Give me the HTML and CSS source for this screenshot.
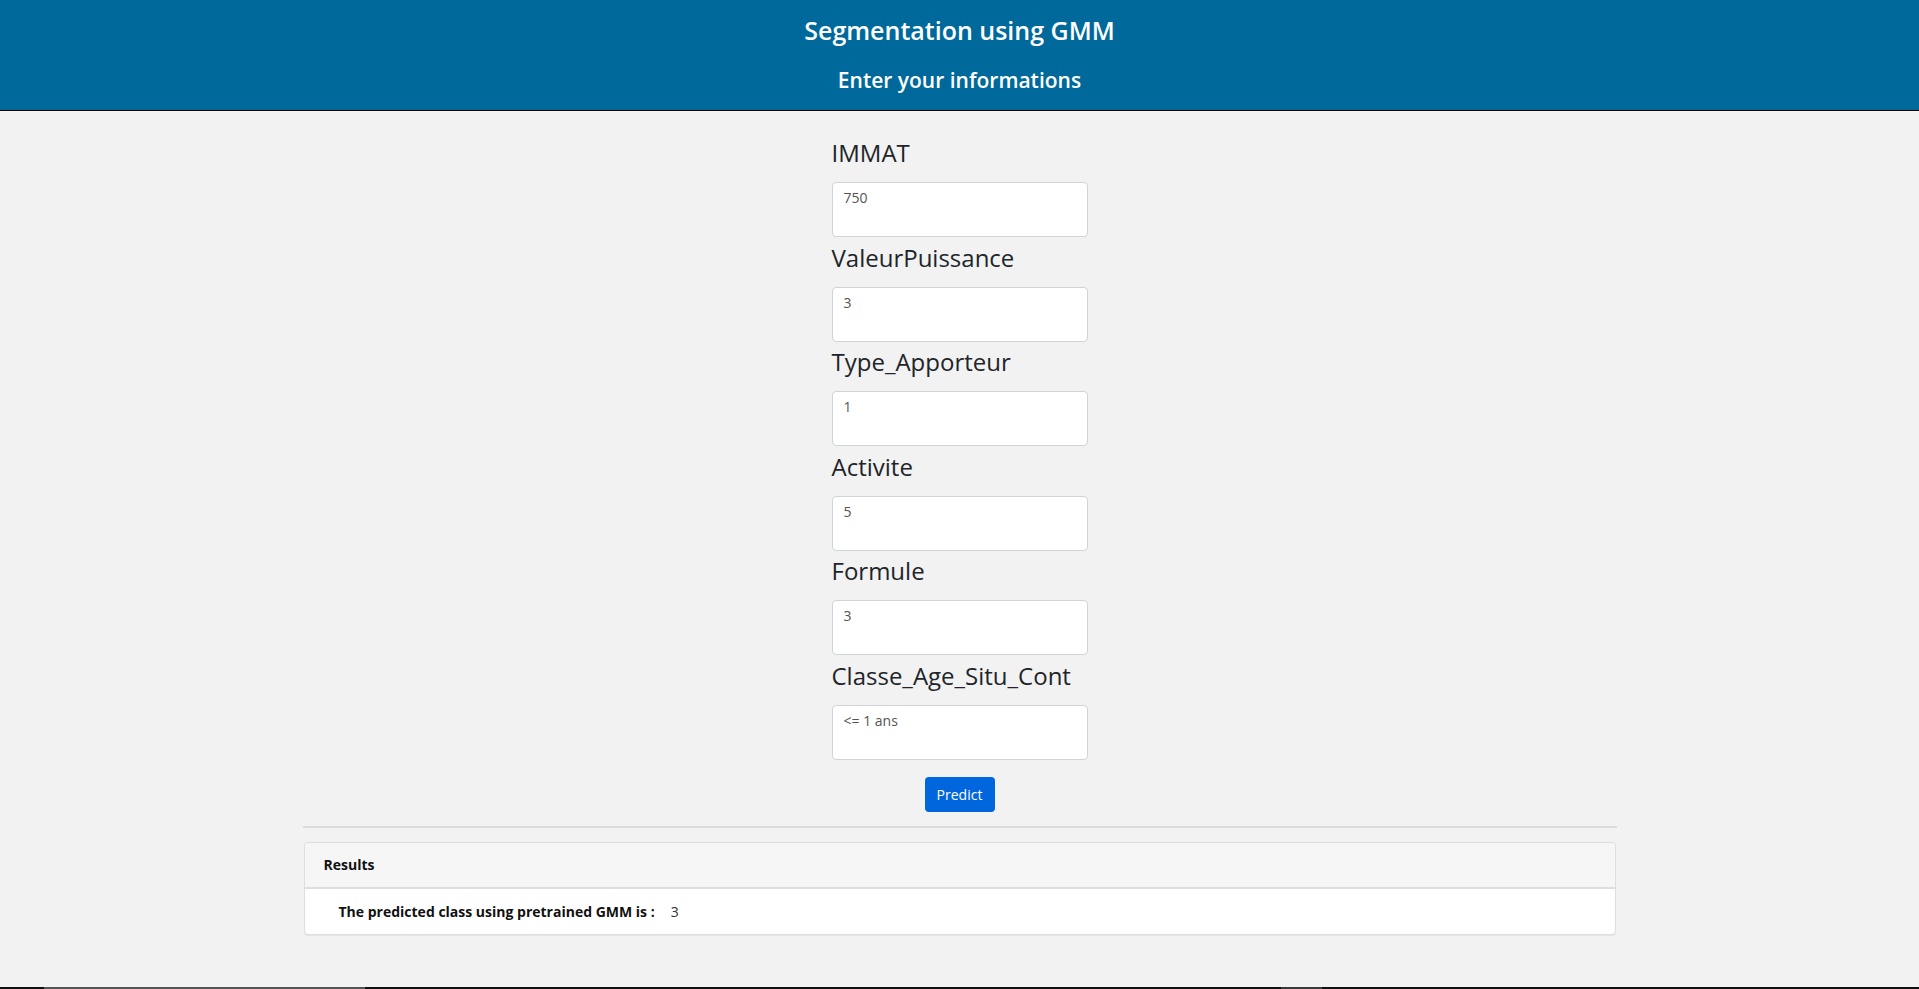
FILE: index.html
```html
<!DOCTYPE html>
<html lang="en">
<head>
<meta charset="utf-8">
<title>Segmentation using GMM</title>
<link rel="stylesheet" href="styles.css">
</head>
<body>
<div class="page">
  <header class="topbar">
    <h1 class="title">Segmentation using GMM</h1>
    <h2 class="subtitle">Enter your informations</h2>
  </header>
  <main class="main">
    <form class="form">
      <label class="label">IMMAT</label>
      <div class="field">750</div>
      <label class="label">ValeurPuissance</label>
      <div class="field">3</div>
      <label class="label">Type_Apporteur</label>
      <div class="field">1</div>
      <label class="label">Activite</label>
      <div class="field">5</div>
      <label class="label">Formule</label>
      <div class="field">3</div>
      <label class="label">Classe_Age_Situ_Cont</label>
      <div class="field">&lt;= 1 ans</div>
      <div class="actions"><button type="button" class="btn">Predict</button></div>
    </form>
    <div class="container">
      <hr class="rule">
      <div class="card">
        <div class="card-header">Results</div>
        <div class="card-body"><span class="res-label">The predicted class using pretrained GMM is :</span><span class="res-value">3</span></div>
      </div>
    </div>
  </main>
  <div class="bottom-strip"><span class="seg seg-a"></span><span class="seg seg-b"></span></div>
</div>
</body>
</html>
```

FILE: styles.css
```css
html, body {
  margin: 0;
  padding: 0;
}
body {
  background: #f2f2f2;
  font-family: "Open Sans", "Noto Sans", sans-serif;
  color: #212529;
}
.page {
  min-height: 100vh;
  display: flex;
  flex-direction: column;
}
.topbar {
  background: #00699b;
  height: 110px;
  border-bottom: 1px solid #000;
  color: #fff;
  text-align: center;
  display: flex;
  flex-direction: column;
  align-items: center;
}
.title {
  margin: 12px 0 0;
  font-size: 25px;
  font-weight: 600;
  line-height: 36px;
}
.subtitle {
  margin: 18px 0 0;
  font-size: 21px;
  font-weight: 600;
  line-height: 28px;
}
.main {
  flex: 1;
}
.form {
  width: 256px;
  margin: 26px auto 0;
  display: flex;
  flex-direction: column;
}
.label {
  font-size: 24px;
  font-weight: 400;
  line-height: 31px;
  margin-bottom: 14px;
  color: #212529;
  white-space: nowrap;
}
.field {
  box-sizing: border-box;
  height: 55px;
  background: #fff;
  border: 1px solid #ced4da;
  border-radius: 4px;
  padding: 5px 11px;
  font-size: 14px;
  line-height: 20px;
  color: #555;
  margin-bottom: 4.6px;
}
.actions {
  display: flex;
  justify-content: center;
  margin-top: 12px;
}
.btn {
  width: 70px;
  height: 35px;
  background: #0066dd;
  color: #fff;
  border: 0;
  border-radius: 4px;
  font-family: inherit;
  font-size: 14px;
  padding: 0;
}
.container {
  width: 1314px;
  margin: 0 auto;
}
.rule {
  margin: 14px 0 0;
  border: 0;
  border-top: 2px solid #dcdcdc;
}
.card {
  margin: 14px 1px 0;
  border: 1px solid #dedede;
  border-radius: 4px;
  background: #fff;
  box-shadow: 0 1px 1px rgba(0,0,0,0.06);
  overflow: hidden;
}
.card-header {
  background: #f6f6f6;
  border-bottom: 2px solid #dedede;
  height: 44px;
  padding: 0 19px;
  display: flex;
  align-items: center;
  font-size: 14px;
  font-weight: 700;
  color: #111;
}
.card-body {
  height: 45px;
  display: flex;
  align-items: center;
  padding: 0 34px;
  font-size: 14px;
  color: #111;
}
.res-label {
  font-weight: 700;
}
.res-value {
  margin-left: 16px;
  color: #333;
}
.bottom-strip {
  height: 2px;
  background: #111;
  display: flex;
}
.seg {
  display: block;
  height: 2px;
  background: #555;
}
.seg-a {
  margin-left: 44px;
  width: 321px;
}
.seg-b {
  margin-left: 916px;
  width: 41px;
  background: #3a3a3a;
}
```
